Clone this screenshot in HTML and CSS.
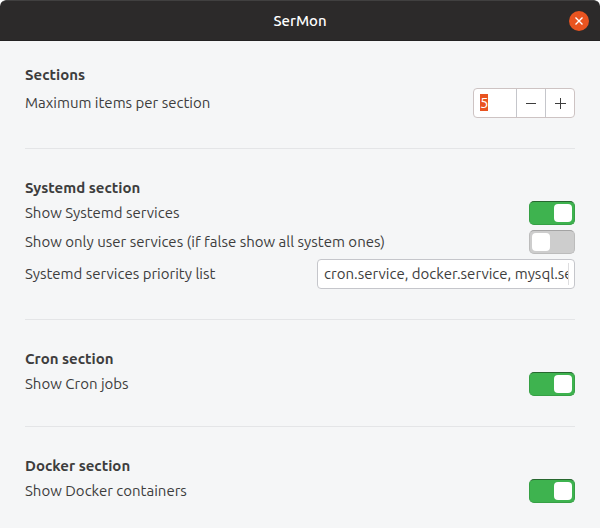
FILE: index.html
```html
<!DOCTYPE html>
<html lang="en">
<head>
<meta charset="utf-8">
<title>SerMon</title>
<link rel="stylesheet" href="styles.css">
</head>
<body>
<div class="window">
  <header class="titlebar">
    <h1 class="title">SerMon</h1>
    <button class="close" type="button" aria-label="Close">
      <svg width="20" height="20" viewBox="0 0 20 20" aria-hidden="true"><path d="M6.5 6.5 13.5 13.5M13.5 6.5 6.5 13.5"/></svg>
    </button>
  </header>
  <main class="content">
    <section class="group">
      <h2 class="heading">Sections</h2>
      <div class="row">
        <label class="label" for="max-items">Maximum items per section</label>
        <div class="spin">
          <input class="spin-value" id="max-items" type="text" inputmode="numeric" value="5">
          <button class="spin-button" type="button" aria-label="Decrease">
            <svg width="12" height="12" viewBox="0 0 12 12" aria-hidden="true"><path d="M1 6.5H11"/></svg>
          </button>
          <button class="spin-button" type="button" aria-label="Increase">
            <svg width="12" height="12" viewBox="0 0 12 12" aria-hidden="true"><path d="M1 6.5H12M6.5 1V12"/></svg>
          </button>
        </div>
      </div>
    </section>
    <section class="group">
      <h2 class="heading">Systemd section</h2>
      <div class="row">
        <label class="label" for="show-systemd">Show Systemd services</label>
        <input class="switch" id="show-systemd" type="checkbox" checked>
      </div>
      <div class="row">
        <label class="label" for="only-user">Show only user services (if false show all system ones)</label>
        <input class="switch" id="only-user" type="checkbox">
      </div>
      <div class="row">
        <label class="label" for="priority">Systemd services priority list</label>
        <div class="entry">
          <input class="entry-value" id="priority" type="text" value="cron.service, docker.service, mysql.service">
        </div>
      </div>
    </section>
    <section class="group">
      <h2 class="heading">Cron section</h2>
      <div class="row">
        <label class="label" for="show-cron">Show Cron jobs</label>
        <input class="switch" id="show-cron" type="checkbox" checked>
      </div>
    </section>
    <section class="group">
      <h2 class="heading">Docker section</h2>
      <div class="row">
        <label class="label" for="show-docker">Show Docker containers</label>
        <input class="switch" id="show-docker" type="checkbox" checked>
      </div>
    </section>
  </main>
</div>
<script src="script.js"></script>
</body>
</html>
```
FILE: styles.css
```css
* {
  box-sizing: border-box;
}

html {
  background: #fff;
}

body {
  min-height: 100vh;
  margin: 0;
  border-radius: 6px 6px 0 0;
  background: #f5f6f7;
  color: #3d3d3d;
  font: 15px/17px Ubuntu, "Noto Sans", sans-serif;
}

input,
button {
  margin: 0;
  padding: 0;
  border: 0;
  outline: 0;
  color: inherit;
  font: inherit;
}

.titlebar {
  display: grid;
  grid-template-columns: 20px 1fr 20px;
  align-items: center;
  height: 41px;
  padding: 0 11px;
  border-top: 1px solid #414040;
  border-bottom: 1px solid #232222;
  border-radius: 6px 6px 0 0;
  background: #2c2a2a;
}

.title {
  grid-column: 2;
  margin: 0;
  color: #fff;
  font-size: 15px;
  font-weight: 500;
  text-align: center;
}

.close {
  display: grid;
  width: 20px;
  height: 20px;
  border-radius: 50%;
  background: #e95420;
}

.close svg {
  fill: none;
  stroke: #fff;
  stroke-width: 1.4;
}

.content {
  padding: 25px;
}

.group {
  display: flex;
  flex-direction: column;
  gap: 5px;
}

.group + .group {
  margin-top: 30px;
  padding-top: 30px;
  border-top: 1px solid #e4e5e7;
}

.heading {
  margin: 0;
  font-size: 15px;
  font-weight: 700;
}

.row {
  display: flex;
  align-items: center;
  justify-content: space-between;
  gap: 16px;
}

.label {
  padding-bottom: 1px;
}

.spin,
.entry {
  display: flex;
  height: 30px;
  border: 1px solid #c5c6cb;
  border-radius: 4px;
  background: #fff;
}

.spin {
  border-color: #cdc3c3;
}

.spin-value {
  width: 42px;
  padding: 0 6px 1px;
  background: none;
}

.spin-value::selection {
  background: #e95420;
  color: #fff;
}

.spin-button {
  display: grid;
  place-items: center;
  width: 29px;
  border-left: 1px solid #c5c6cb;
  background: none;
}

.spin-button svg {
  fill: none;
  stroke: #3d3d3d;
}

.entry {
  position: relative;
  width: 258px;
  padding: 0 6px;
}

.entry::after {
  content: "";
  position: absolute;
  top: 3px;
  right: 5px;
  bottom: 3px;
  border-right: 1px solid #dddddf;
}

.entry-value {
  width: 100%;
  padding-bottom: 1px;
  background: none;
}

.switch {
  display: flex;
  flex: none;
  width: 46px;
  height: 24px;
  padding: 2px;
  border: 1px solid #bcbcbc;
  border-top-color: #a3a3a3;
  border-radius: 5px;
  appearance: none;
  background: #cdcdcd;
}

.switch::before {
  content: "";
  width: 18px;
  height: 18px;
  border-radius: 4px;
  background: #fff;
}

.switch:checked {
  justify-content: flex-end;
  border-color: #36a045;
  border-top-color: #27672f;
  background: #3eb34f;
}
```
FILE: script.js
```js
const maxItems = document.getElementById("max-items");
maxItems.focus();
maxItems.select();
```
